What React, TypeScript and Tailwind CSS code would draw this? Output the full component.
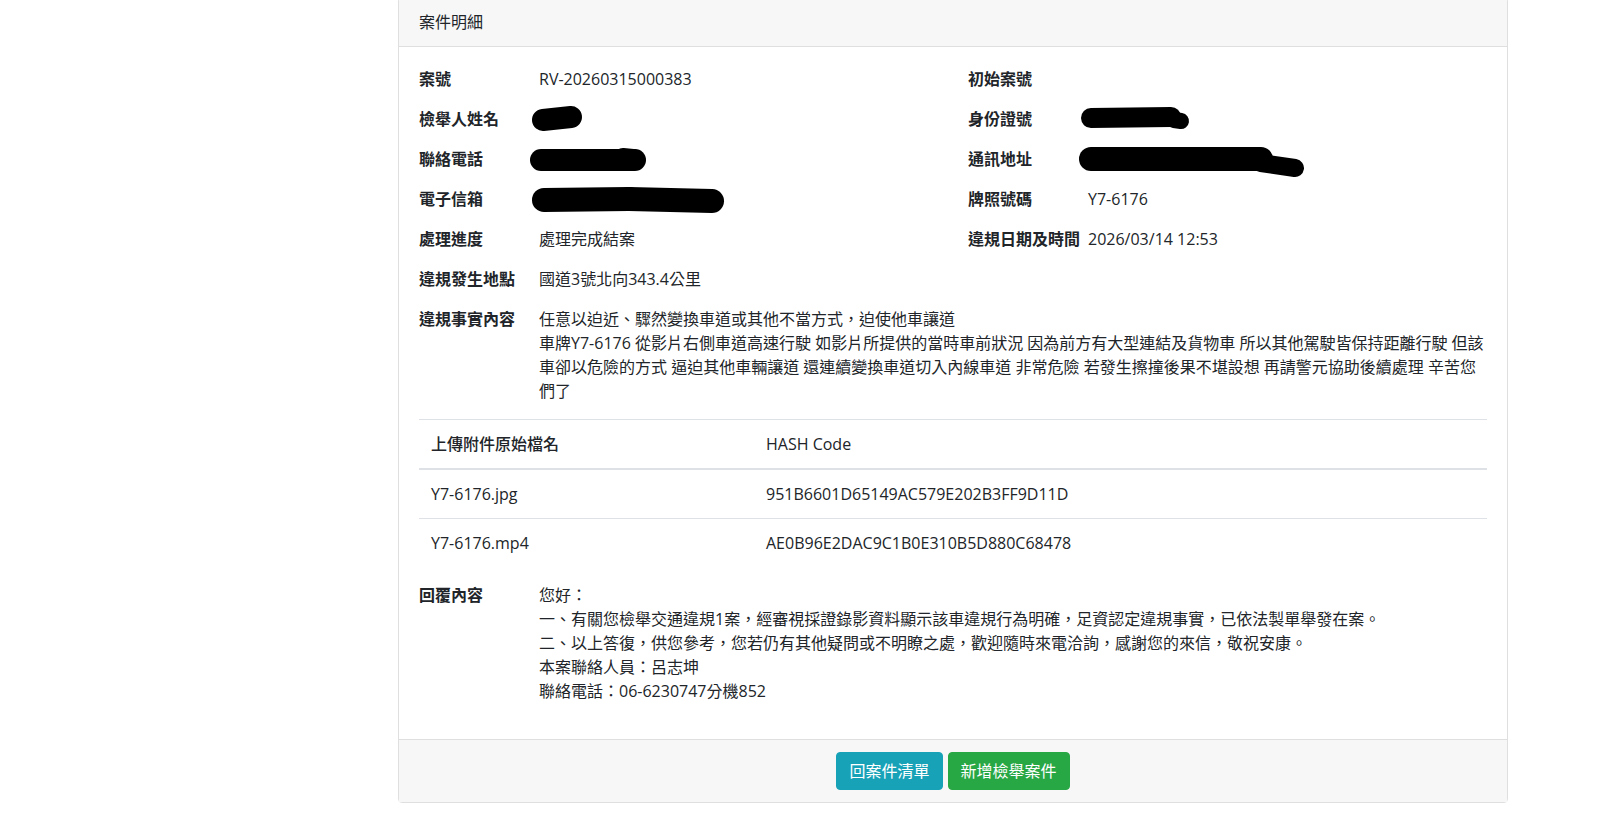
import React from "react";

function Field({ label, children }: { label: string; children?: React.ReactNode }) {
  return (
    <div className="flex mb-4 leading-6">
      <div className="w-[120px] shrink-0 font-semibold">{label}</div>
      <div className="flex-1 min-w-0 relative">{children}</div>
    </div>
  );
}

type Stroke = { x1: number; y1: number; x2: number; y2: number; w: number };

function Blob({ strokes }: { strokes: Stroke[] }) {
  return (
    <svg width="10" height="24" className="block overflow-visible" viewBox="0 0 10 24">
      {strokes.map((s, i) => (
        <line
          key={i}
          x1={s.x1}
          y1={s.y1}
          x2={s.x2}
          y2={s.y2}
          stroke="#000"
          strokeWidth={s.w}
          strokeLinecap="round"
        />
      ))}
    </svg>
  );
}

export default function App() {
  return (
    <div className="w-[1606px] h-[817px] overflow-hidden bg-white text-[#212529] text-[16px] font-['Segoe_UI','Open_Sans','Noto_Sans_CJK_TC',sans-serif]">
      <div className="ml-[398px] w-[1110px] -mt-[3px] border border-[#dfdfdf] rounded-[4px] bg-white">
        <div className="bg-[#f7f7f7] border-b border-[#dfdfdf] px-5 py-3 leading-6">案件明細</div>
        <div className="p-5">
          <div className="grid grid-cols-2 gap-x-[30px]">
            <Field label="案號">RV-20260315000383</Field>
            <Field label="初始案號"></Field>
            <Field label="檢舉人姓名">
              <Blob strokes={[{ x1: 4, y1: 13, x2: 32, y2: 10, w: 22 }]} />
            </Field>
            <Field label="身份證號">
              <Blob
                strokes={[
                  { x1: 3, y1: 11, x2: 83, y2: 10, w: 20 },
                  { x1: 86, y1: 13, x2: 93, y2: 14, w: 16 },
                ]}
              />
            </Field>
            <Field label="聯絡電話">
              <Blob
                strokes={[
                  { x1: 2, y1: 13, x2: 96, y2: 13, w: 22 },
                  { x1: 84, y1: 10, x2: 94, y2: 11, w: 18 },
                ]}
              />
            </Field>
            <Field label="通訊地址">
              <Blob
                strokes={[
                  { x1: 3, y1: 12, x2: 173, y2: 12, w: 24 },
                  { x1: 173, y1: 16, x2: 207, y2: 21, w: 18 },
                ]}
              />
            </Field>
            <Field label="電子信箱">
              <Blob
                strokes={[
                  { x1: 5, y1: 13, x2: 90, y2: 12, w: 24 },
                  { x1: 90, y1: 12, x2: 173, y2: 14, w: 24 },
                ]}
              />
            </Field>
            <Field label="牌照號碼">Y7-6176</Field>
            <Field label="處理進度">處理完成結案</Field>
            <Field label="違規日期及時間">2026/03/14 12:53</Field>
            <Field label="違規發生地點">國道3號北向343.4公里</Field>
            <div />
          </div>
          <Field label="違規事實內容">
            <div>任意以迫近、驟然變換車道或其他不當方式，迫使他車讓道</div>
            <div className="whitespace-nowrap">
              車牌Y7-6176 從影片右側車道高速行駛 如影片所提供的當時車前狀況 因為前方有大型連結及貨物車 所以其他駕駛皆保持距離行駛 但該
            </div>
            <div className="whitespace-nowrap">
              車卻以危險的方式 逼迫其他車輛讓道 還連續變換車道切入內線車道 非常危險 若發生擦撞後果不堪設想 再請警元協助後續處理 辛苦您
            </div>
            <div>們了</div>
          </Field>
          <table className="w-full border-collapse mb-4 leading-6">
            <thead>
              <tr>
                <th className="w-[335px] text-left font-medium p-3 border-t border-b-2 border-[#dee2e6]">
                  上傳附件原始檔名
                </th>
                <th className="text-left font-normal p-3 border-t border-b-2 border-[#dee2e6]">HASH Code</th>
              </tr>
            </thead>
            <tbody>
              <tr>
                <td className="p-3 border-t border-[#dee2e6]">Y7-6176.jpg</td>
                <td className="p-3 border-t border-[#dee2e6]">951B6601D65149AC579E202B3FF9D11D</td>
              </tr>
              <tr>
                <td className="p-3 border-t border-[#dee2e6]">Y7-6176.mp4</td>
                <td className="p-3 border-t border-[#dee2e6]">AE0B96E2DAC9C1B0E310B5D880C68478</td>
              </tr>
            </tbody>
          </table>
          <Field label="回覆內容">
            <div>您好：</div>
            <div>一、有關您檢舉交通違規1案，經審視採證錄影資料顯示該車違規行為明確，足資認定違規事實，已依法製單舉發在案。</div>
            <div>二、以上答復，供您參考，您若仍有其他疑問或不明瞭之處，歡迎隨時來電洽詢，感謝您的來信，敬祝安康。</div>
            <div>本案聯絡人員：呂志坤</div>
            <div>聯絡電話：06-6230747分機852</div>
          </Field>
        </div>
        <div className="bg-[#f7f7f7] border-t border-[#dfdfdf] px-5 py-3 flex justify-center gap-[5px]">
          <button className="bg-[#17a2b8] border border-[#17a2b8] text-white rounded-[4px] px-3 py-1.5 leading-6 text-[16px]">
            回案件清單
          </button>
          <button className="bg-[#28a745] border border-[#28a745] text-white rounded-[4px] px-3 py-1.5 leading-6 text-[16px]">
            新增檢舉案件
          </button>
        </div>
      </div>
    </div>
  );
}
